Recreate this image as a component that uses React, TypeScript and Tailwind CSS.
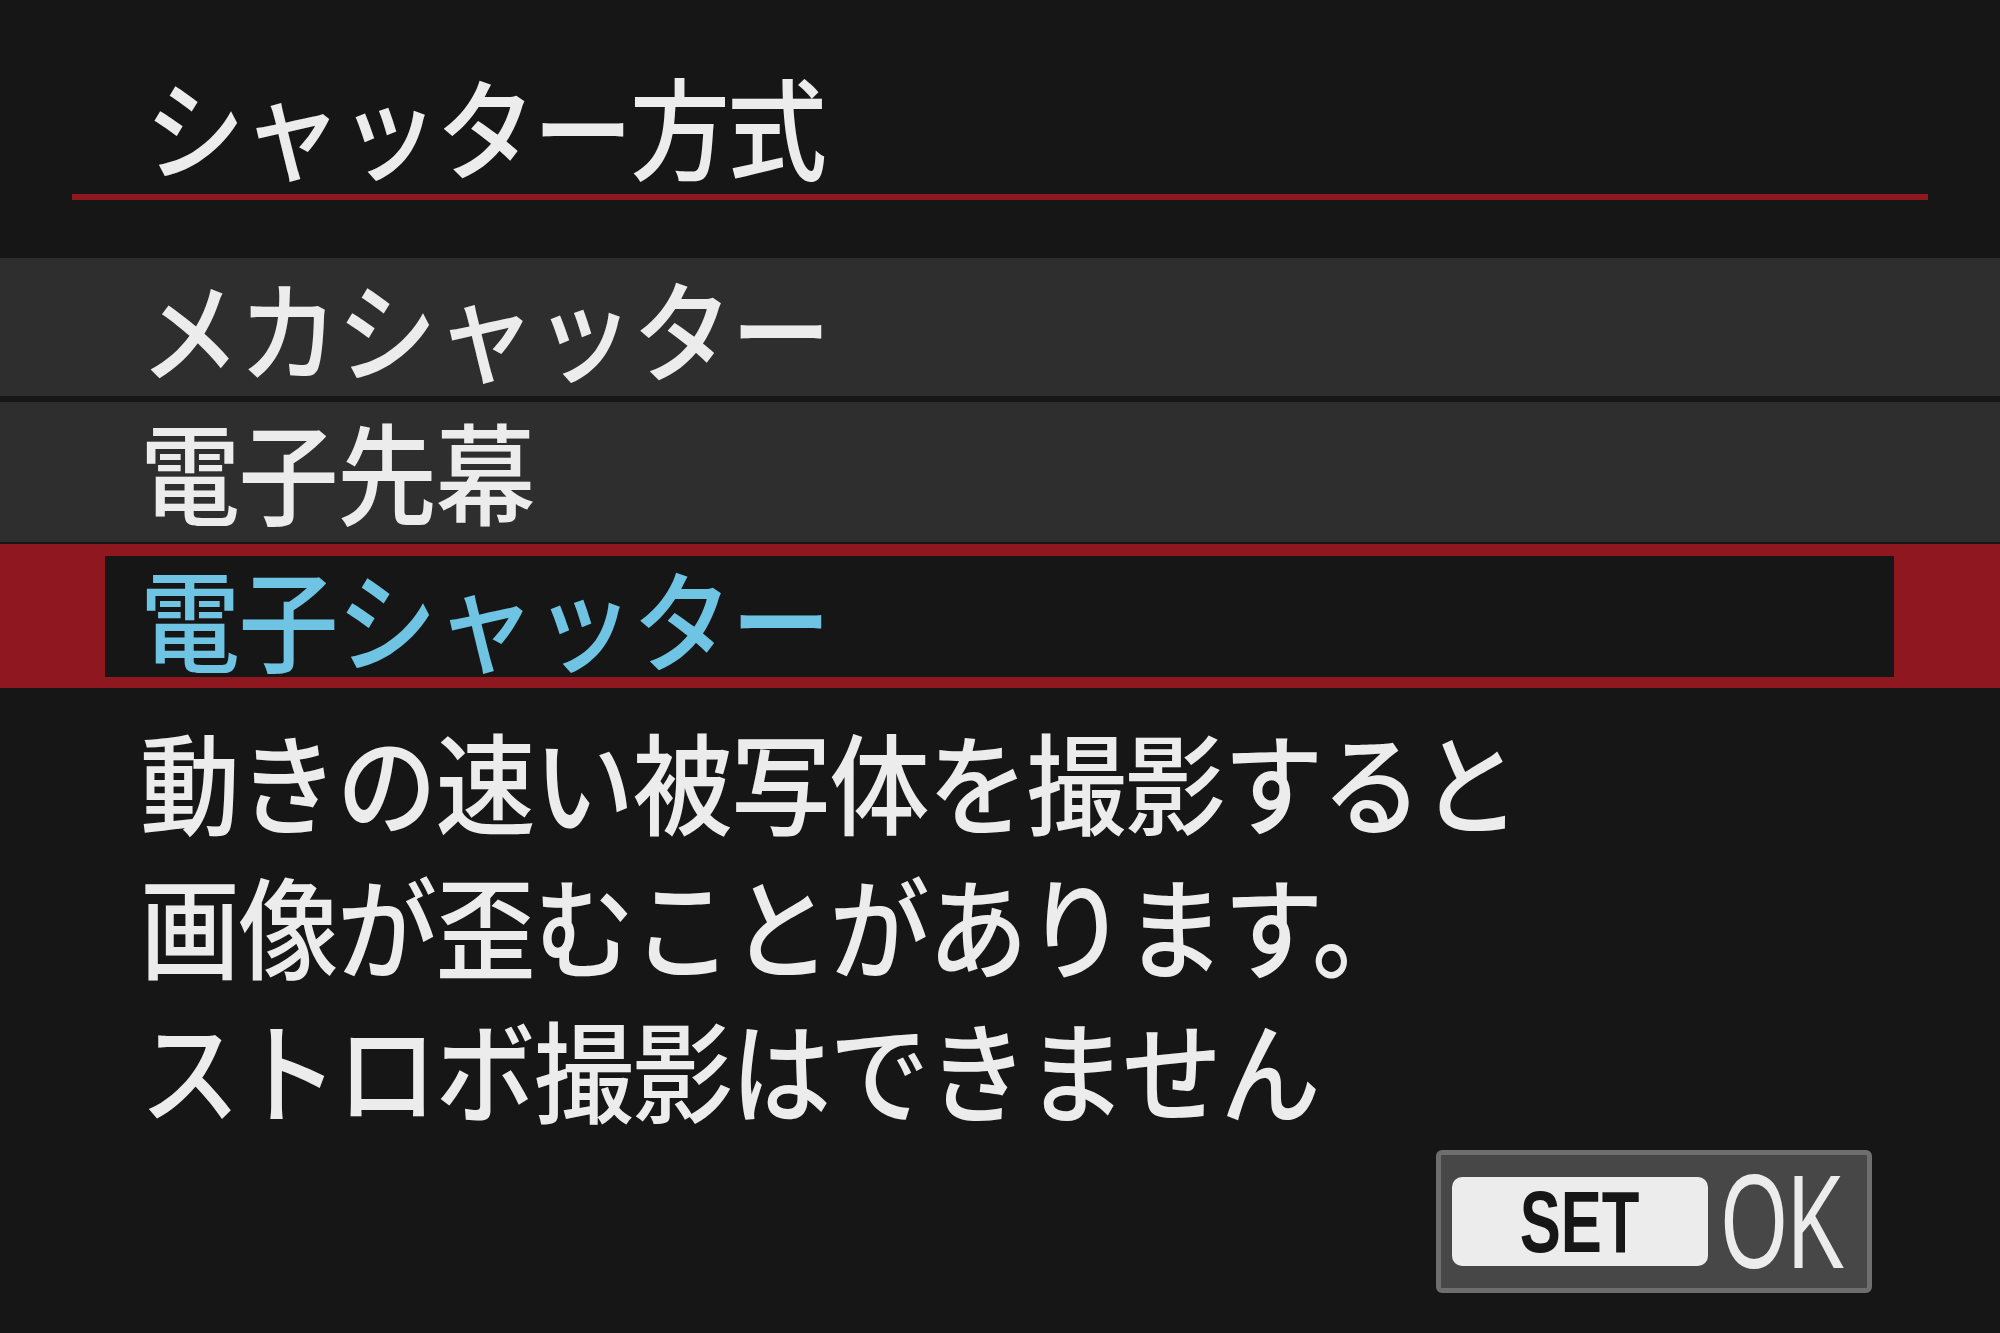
export default function App() {
  const jp = "font-['Noto_Sans_CJK_JP','Noto_Sans_CJK_SC',sans-serif]";
  const text = 'inline-block text-[100px] font-medium leading-none tracking-[-1.5px] scale-y-[1.1] whitespace-nowrap';

  return (
    <div className={`w-[2000px] h-[1333px] bg-[#161616] overflow-hidden ${jp}`}>
      {/* タイトル */}
      <div className="px-[72px]">
        <div className="h-[194px] pt-[56px] pl-[73px] flex items-center text-[#ececec]">
          <span className="inline-block text-[100px] font-medium leading-none tracking-[-3px] scale-y-[1.1] whitespace-nowrap">
            シャッター方式
          </span>
        </div>
        <div className="h-[6px] bg-[#8e1720]" />
      </div>

      {/* 選択肢 */}
      <div className="mt-[58px] h-[138px] bg-[#2e2e2e] flex items-center pl-[140px] text-[#ececec]">
        <span className={text}>メカシャッター</span>
      </div>
      <div className="mt-[6px] h-[140px] bg-[#2e2e2e] flex items-center pl-[140px] pb-[4px] text-[#ececec]">
        <span className={text}>電子先幕</span>
      </div>
      <div className="mt-[2px] h-[144px] bg-[#8e1720] pt-[12px] pb-[11px] pl-[105px] pr-[106px]">
        <div className="h-full bg-[#161616] flex items-center pl-[35px] text-[#6ec4e2]">
          <span className={text}>電子シャッター</span>
        </div>
      </div>

      {/* 説明 */}
      <div className="pt-[20px] pl-[140px] text-[#ececec]">
        <div className="h-[144px] flex items-center">
          <span className={text}>動きの速い被写体を撮影すると</span>
        </div>
        <div className="h-[144px] flex items-center">
          <span className={text}>画像が歪むことがあります。</span>
        </div>
        <div className="h-[144px] flex items-center">
          <span className={text}>ストロボ撮影はできません</span>
        </div>
      </div>

      {/* SET OK */}
      <div className="mt-[10px] flex justify-end pr-[128px]">
        <div className="w-[436px] h-[143px] border-[5px] border-[#6e6e6e] bg-[#474747] rounded-[6px] flex items-center pl-[11px]">
          <div className="shrink-0 w-[256px] h-[89px] bg-[#ececec] rounded-[10px] flex items-center justify-center">
            <span className="inline-block font-['Liberation_Sans',sans-serif] font-bold text-[88px] leading-none text-[#161616] scale-x-[0.7]">
              SET
            </span>
          </div>
          <div className="w-[149px] shrink-0 flex items-center justify-center">
            <span className="inline-block font-['Liberation_Sans',sans-serif] text-[134px] leading-none text-[#ececec] scale-x-[0.64]">
              OK
            </span>
          </div>
        </div>
      </div>
    </div>
  );
}
